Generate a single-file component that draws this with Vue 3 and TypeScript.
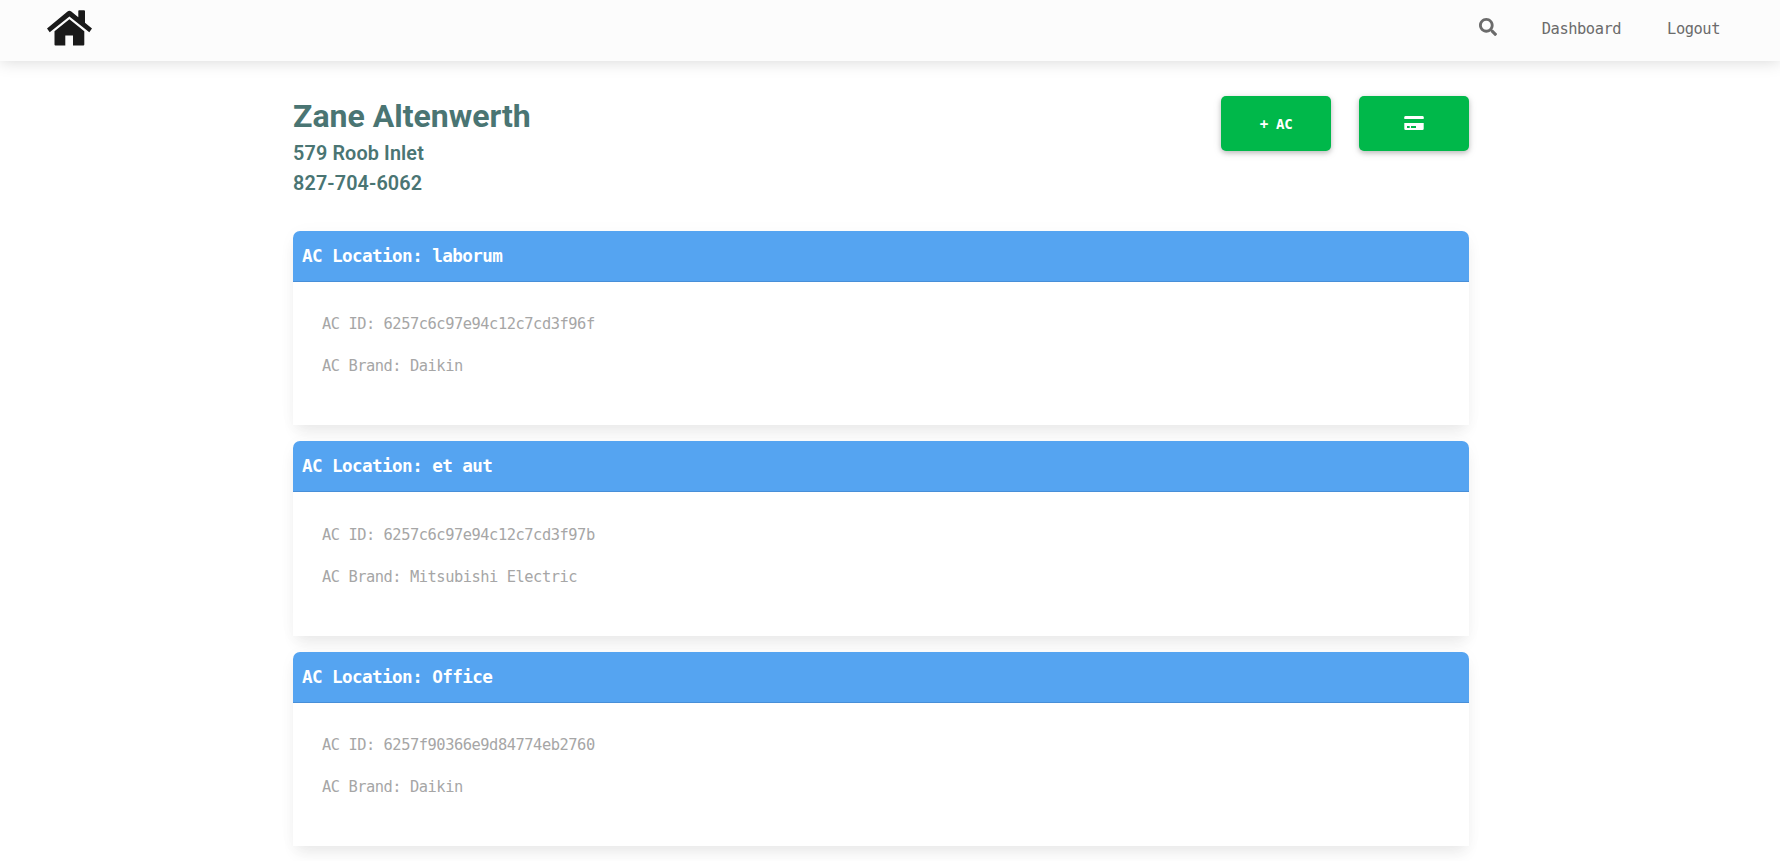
<script setup lang="ts">
interface AirConditioner {
  location: string
  id: string
  brand: string
}

const customer = {
  name: 'Zane Altenwerth',
  address: '579 Roob Inlet',
  phone: '827-704-6062',
}

const units: AirConditioner[] = [
  { location: 'laborum', id: '6257c6c97e94c12c7cd3f96f', brand: 'Daikin' },
  { location: 'et aut', id: '6257c6c97e94c12c7cd3f97b', brand: 'Mitsubishi Electric' },
  { location: 'Office', id: '6257f90366e9d84774eb2760', brand: 'Daikin' },
]
</script>

<template>
  <div class="page">
    <header class="navbar">
      <a class="brand" aria-label="Home">
        <svg width="45" height="36" viewBox="0 0 45 36" fill="#1a1a1a">
          <path d="M7.500 21.300 L22.400 9.300 L37.300 21.300 V34.500 Q37.300 35.500 36.300 35.500 H26 V25.500 H18.300 V35.500 H8.500 Q7.500 35.500 7.500 34.500 Z" />
          <path d="M31.300 1 Q31.300 .2 32.100 .2 H37 Q38 .2 38 1.200 V12.800 L45 18.400 L42.300 22.200 L22.400 6.500 L2.700 22.200 L0 18.400 L20.500 1.600 Q22.400 0 24.300 1.600 L31.300 7.300 Z" />
        </svg>
      </a>
      <nav class="links">
        <a class="search" aria-label="Search">
          <svg width="18" height="18" viewBox="0 0 512 512" fill="#6b6b6b">
            <path d="M505 442.7L405.3 343c-4.500-4.500-10.600-7-17-7H372c27.600-35.300 44-79.700 44-128C416 93.100 322.900 0 208 0S0 93.100 0 208s93.100 208 208 208c48.300 0 92.700-16.400 128-44v16.300c0 6.400 2.500 12.500 7 17l99.700 99.700c9.400 9.400 24.600 9.400 33.900 0l28.300-28.300c9.400-9.400 9.400-24.600.1-34zM208 336c-70.700 0-128-57.200-128-128 0-70.700 57.200-128 128-128 70.700 0 128 57.200 128 128 0 70.700-57.200 128-128 128z" />
          </svg>
        </a>
        <a class="link">Dashboard</a>
        <a class="link">Logout</a>
      </nav>
    </header>

    <main class="content">
      <section class="summary">
        <div class="customer">
          <h1>{{ customer.name }}</h1>
          <h2>{{ customer.address }}</h2>
          <h2>{{ customer.phone }}</h2>
        </div>
        <div class="actions">
          <button class="btn"><span>+ AC</span></button>
          <button class="btn" aria-label="Payment">
            <svg width="20" height="14" viewBox="0 0 20 14" fill="#fff">
              <path d="M.3 3V1.300Q.3 0 1.600 0H18.400Q19.700 0 19.700 1.300V3Z" />
              <path fill-rule="evenodd" d="M.3 7H19.700V12.700Q19.700 14 18.400 14H1.600Q.3 14 .3 12.700ZM3 10V12H5.700V10ZM7 10V12H12V10Z" />
            </svg>
          </button>
        </div>
      </section>

      <section class="cards">
        <article v-for="unit in units" :key="unit.id" class="card">
          <h3 class="card-header">AC Location: {{ unit.location }}</h3>
          <div class="card-body">
            <p>AC ID: {{ unit.id }}</p>
            <p>AC Brand: {{ unit.brand }}</p>
          </div>
        </article>
      </section>
    </main>
  </div>
</template>

<style>
body {
  margin: 0;
  background: #fff;
}
</style>

<style scoped>
.page {
  height: 861px;
  overflow: hidden;
  font-family: 'DejaVu Sans Mono', 'Liberation Mono', monospace;
}

.navbar {
  box-sizing: border-box;
  height: 61px;
  padding: 0 60px 0 46.5px;
  display: flex;
  justify-content: space-between;
  align-items: flex-start;
  background: #fcfcfc;
  box-shadow: 0 0 16px rgba(0, 0, 0, 0.17);
}

.brand {
  padding-top: 10px;
}

.brand svg,
.search svg,
.btn svg {
  display: block;
}

.links {
  display: flex;
  align-items: flex-start;
  color: #6b6b6b;
}

.search {
  padding-top: 18px;
  margin-right: 45px;
}

.link {
  font-size: 15.4px;
  letter-spacing: -0.450px;
  line-height: 20px;
  padding-top: 19px;
}

.link + .link {
  margin-left: 46px;
}

.content {
  width: 1176px;
  margin-left: 293px;
}

.summary {
  display: flex;
  justify-content: space-between;
  height: 169.5px;
}

.customer {
  padding-top: 35px;
  color: #4a7573;
  font-family: Roboto, sans-serif;
}

.customer h1 {
  margin: 0 0 3px;
  font-size: 32px;
  line-height: 40px;
  font-weight: 700;
}

.customer h2 {
  margin: 0;
  font-size: 19.800px;
  letter-spacing: 0.140px;
  line-height: 30px;
  font-weight: 600;
}

.actions {
  display: flex;
  gap: 28px;
  padding-top: 35px;
}

.btn {
  display: flex;
  align-items: center;
  justify-content: center;
  width: 110px;
  height: 55px;
  padding: 0;
  border: 0;
  border-radius: 5px;
  background: #00b84a;
  color: #fff;
  font-family: inherit;
  font-size: 14.200px;
  letter-spacing: -0.400px;
  font-weight: 700;
  box-shadow: 0 2px 5px rgba(0, 0, 0, 0.2), 0 2px 10px rgba(0, 0, 0, 0.1);
}

.btn svg {
  margin-bottom: 2px;
}

.cards {
  display: flex;
  flex-direction: column;
  gap: 16px;
}

.card {
  height: 194.5px;
  border-radius: 7px 7px 0 0;
  background: #fff;
  box-shadow: 0 10px 15px -3px rgba(0, 0, 0, 0.07), 0 2px 20px -2px rgba(0, 0, 0, 0.04);
}

.card-header {
  box-sizing: border-box;
  height: 51px;
  margin: 0;
  padding-left: 9px;
  border-bottom: 1px solid #488fd8;
  border-radius: 7px 7px 0 0;
  background: #55a4f1;
  color: #fff;
  font-size: 17.600px;
  letter-spacing: -0.580px;
  line-height: 50px;
  font-weight: 700;
}

.card-body {
  padding: 30.500px 29px 0;
  color: #a6a6a6;
  font-size: 15.400px;
  letter-spacing: -0.470px;
}

.card-body p {
  margin: 0 0 18.400px;
  line-height: 24px;
}
</style>
